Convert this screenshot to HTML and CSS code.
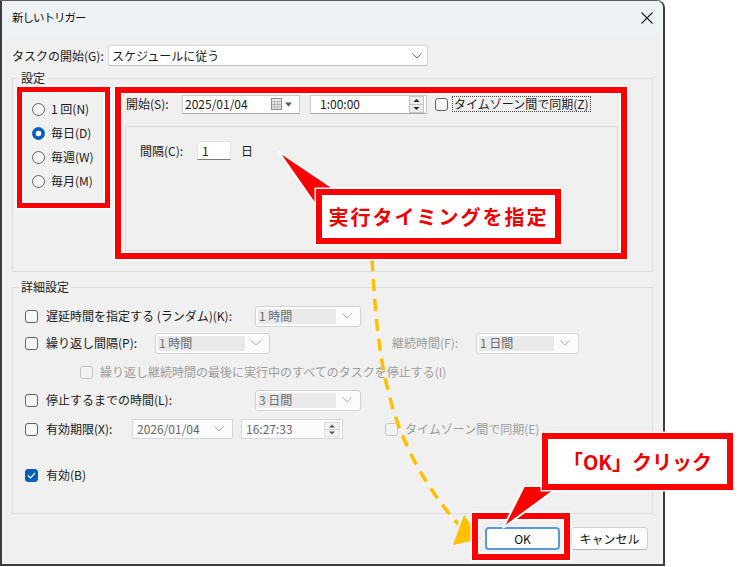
FILE: index.html
```html
<!DOCTYPE html>
<html lang="ja">
<head>
<meta charset="utf-8">
<title>新しいトリガー</title>
<link rel="stylesheet" href="styles.css">
</head>
<body>
<div class="window">
  <div class="titlebar">
    <span class="title">新しいトリガー</span>
    <svg class="close" width="12" height="12" viewBox="0 0 12 12"><path d="M0.5 0.5 L11.5 11.5 M11.5 0.5 L0.5 11.5" stroke="#1c1c1c" stroke-width="1.1" fill="none"/></svg>
  </div>
  <div class="body">
    <div class="row row-begin">
      <span class="lbl w-begin">タスクの開始(G):</span>
      <div class="combo combo-begin">
        <span class="combo-text">スケジュールに従う</span>
        <svg class="chev" width="10" height="6" viewBox="0 0 10 6"><path d="M0.5 0.5 L5 5 L9.5 0.5" stroke="#6a6a6a" stroke-width="1" fill="none"/></svg>
      </div>
    </div>

    <section class="group group-settings">
      <div class="group-title">設定</div>
      <div class="settings-inner">
        <div class="radios">
          <div class="radio-row"><span class="radio"></span><span class="lbl">1 回(N)</span></div>
          <div class="radio-row"><span class="radio checked"></span><span class="lbl">毎日(D)</span></div>
          <div class="radio-row"><span class="radio"></span><span class="lbl">毎週(W)</span></div>
          <div class="radio-row"><span class="radio"></span><span class="lbl">毎月(M)</span></div>
        </div>
        <div class="schedule">
          <div class="row row-start">
            <span class="lbl w-start">開始(S):</span>
            <div class="field date-field">
              <span>2025/01/04</span>
              <svg class="cal" width="22" height="12" viewBox="0 0 22 12">
                <rect x="0.5" y="0.5" width="10" height="11" fill="#e9e9e9" stroke="#8c8c8c"/>
                <path d="M0.5 3.5 H10.5 M0.5 6.5 H10.5 M0.5 9 H10.5 M3.5 3.5 V11.5 M7 3.5 V11.5" stroke="#a8a8a8" stroke-width="0.8"/>
                <path d="M14 4.5 L21 4.5 L17.5 8.5 Z" fill="#3c5a8c"/>
              </svg>
            </div>
            <div class="field time-field">
              <span>1:00:00</span>
              <svg class="spin" width="15" height="17" viewBox="0 0 15 17">
                <rect x="0.5" y="0.5" width="14" height="16" fill="#ececec" stroke="#c4c4c4"/>
                <path d="M1 8.5 H14" stroke="#c4c4c4"/>
                <path d="M4.5 6 L10.5 6 L7.5 3 Z" fill="#222"/>
                <path d="M4.5 11 L10.5 11 L7.5 14 Z" fill="#222"/>
              </svg>
            </div>
            <span class="check"></span>
            <span class="lbl focus-label">タイムゾーン間で同期(Z)</span>
          </div>
          <div class="subpanel">
            <div class="row row-interval">
              <span class="lbl w-interval">間隔(C):</span>
              <div class="input-box">1</div>
              <span class="lbl unit">日</span>
            </div>
          </div>
        </div>
      </div>
    </section>

    <section class="group group-adv">
      <div class="group-title">詳細設定</div>
      <div class="adv-inner">
        <div class="row adv-row">
          <span class="check"></span>
          <span class="lbl cb-lbl w-long">遅延時間を指定する (ランダム)(K):</span>
          <div class="dcombo w106"><span class="dtext">1 時間</span><svg class="chev" width="10" height="6" viewBox="0 0 10 6"><path d="M0.5 0.5 L5 5 L9.5 0.5" stroke="#b0b0b0" stroke-width="1" fill="none"/></svg></div>
        </div>
        <div class="row adv-row m5">
          <span class="check"></span>
          <span class="lbl cb-lbl w-repeat">繰り返し間隔(P):</span>
          <div class="dcombo w115"><span class="dtext">1 時間</span><svg class="chev" width="10" height="6" viewBox="0 0 10 6"><path d="M0.5 0.5 L5 5 L9.5 0.5" stroke="#b0b0b0" stroke-width="1" fill="none"/></svg></div>
          <span class="lbl dim w-dur">継続時間(F):</span>
          <div class="dcombo w103"><span class="dtext">1 日間</span><svg class="chev" width="10" height="6" viewBox="0 0 10 6"><path d="M0.5 0.5 L5 5 L9.5 0.5" stroke="#b0b0b0" stroke-width="1" fill="none"/></svg></div>
        </div>
        <div class="row adv-row m7">
          <span class="check disabled sub-check"></span>
          <span class="lbl dim sub-lbl">繰り返し継続時間の最後に実行中のすべてのタスクを停止する(I)</span>
        </div>
        <div class="row adv-row m6">
          <span class="check"></span>
          <span class="lbl cb-lbl w-long">停止するまでの時間(L):</span>
          <div class="dcombo w106"><span class="dtext">3 日間</span><svg class="chev" width="10" height="6" viewBox="0 0 10 6"><path d="M0.5 0.5 L5 5 L9.5 0.5" stroke="#b0b0b0" stroke-width="1" fill="none"/></svg></div>
        </div>
        <div class="row adv-row m7">
          <span class="check"></span>
          <span class="lbl cb-lbl w-exp">有効期限(X):</span>
          <div class="dfield w101"><span>2026/01/04</span><svg class="chev" width="10" height="6" viewBox="0 0 10 6"><path d="M0.5 0.5 L5 5 L9.5 0.5" stroke="#b0b0b0" stroke-width="1" fill="none"/></svg></div>
          <div class="dfield w102 ml8"><span>16:27:33</span>
            <svg class="spin" width="16" height="17" viewBox="0 0 16 17">
              <rect x="0.5" y="1.5" width="15" height="14" fill="#f3f3f3" stroke="#dcdcdc"/>
              <path d="M1 8.5 H15" stroke="#d0d0d0"/>
              <path d="M5 6.5 L11 6.5 L8 3.5 Z" fill="#555"/>
              <path d="M5 10.5 L11 10.5 L8 13.5 Z" fill="#555"/>
            </svg>
          </div>
          <span class="check disabled tz-check"></span>
          <span class="lbl dim tz-lbl">タイムゾーン間で同期(E)</span>
        </div>
        <div class="row adv-row m24">
          <span class="check checked">
            <svg width="9" height="7" viewBox="0 0 9 7"><path d="M1 3.5 L3.5 6 L8 1" stroke="#fff" stroke-width="1.2" fill="none"/></svg>
          </span>
          <span class="lbl cb-lbl">有効(B)</span>
        </div>
      </div>
    </section>

    <div class="buttons">
      <div class="btn btn-ok">OK</div>
      <div class="btn btn-cancel">キャンセル</div>
    </div>
  </div>
</div>

<svg class="annot" width="737" height="567" viewBox="0 0 737 567">
  <path d="M372,259 C378,360 385,440 458,524" stroke="#ffc000" stroke-width="3.5" stroke-dasharray="12 8" fill="none"/>
  <polygon points="481,539 453,545 464,515" fill="#ffc000"/>
  <g fill="none">
    <rect x="19.5" y="89.5" width="88" height="116" stroke="#fff" stroke-width="8"/>
    <rect x="19.5" y="89.5" width="88" height="116" stroke="#f00" stroke-width="5"/>
    <rect x="118" y="90" width="506" height="166" stroke="#fff" stroke-width="9"/>
    <rect x="118" y="90" width="506" height="166" stroke="#f00" stroke-width="6"/>
    <rect x="475" y="516" width="92" height="41" stroke="#fff" stroke-width="9"/>
    <rect x="475" y="516" width="92" height="41" stroke="#f00" stroke-width="6"/>
  </g>
  <polygon points="278,151 342,194 322,214" fill="#f00" stroke="#fff" stroke-width="2"/>
  <polygon points="503,528 524,486 560,486" fill="#f00" stroke="#fff" stroke-width="2"/>
</svg>
<div class="callout callout-timing">実行タイミングを指定</div>
<div class="callout callout-ok">「OK」クリック</div>
</body>
</html>
```
FILE: styles.css
```css
* { box-sizing: border-box; }

body {
  margin: 0;
  width: 737px;
  height: 567px;
  position: relative;
  overflow: hidden;
  background: #ffffff;
  font-family: "Noto Sans CJK JP", "Noto Sans", sans-serif;
  font-size: 12px;
  color: #1a1a1a;
}

.window {
  width: 665px;
  height: 566px;
  border: 2px solid #3d3d3d;
  border-top: 1px solid #5a5a5a;
  border-top-right-radius: 8px;
  background: #f0f0f0;
  display: flex;
  flex-direction: column;
  overflow: hidden;
}

.titlebar {
  flex: none;
  height: 34px;
  background: #eef2f7;
  display: flex;
  align-items: center;
  justify-content: space-between;
  padding: 0 10px;
}

.title {
  font-size: 11.5px;
  letter-spacing: -1px;
  line-height: 1;
  color: #111;
}

.body {
  flex: 1;
  padding: 0 10px;
  display: flex;
  flex-direction: column;
}

.row {
  display: flex;
  align-items: center;
}

.lbl {
  line-height: 1;
  white-space: nowrap;
}

.row-begin {
  flex: none;
  margin-top: 10px;
  height: 21px;
}

.w-begin { width: 96px; }

.combo {
  height: 21px;
  display: flex;
  align-items: center;
  justify-content: space-between;
  background: #fff;
  border: 1px solid #d6d6d6;
  border-bottom-color: #bdbdbd;
  border-radius: 3px;
  padding: 0 5px 0 3px;
  line-height: 1;
}

.combo-begin { width: 320px; }

/* group boxes */
.group {
  flex: none;
  border: 1px solid #dcdcdc;
}

.group-title {
  width: fit-content;
  margin: -8px 0 0 6px;
  padding: 0 2px;
  height: 14px;
  line-height: 14px;
  background: #f0f0f0;
}

.group-settings { margin-top: 12px; }

.settings-inner {
  height: 186px;
  padding-top: 9px;
  display: flex;
}

.radios {
  width: 112px;
  padding-left: 19px;
  padding-top: 3px;
}

.radio-row {
  height: 24px;
  display: flex;
  align-items: center;
  gap: 6px;
}

.radio {
  flex: none;
  width: 13px;
  height: 13px;
  border-radius: 50%;
  border: 1px solid #616161;
  background: #f7f7f7;
}

.radio.checked {
  border-color: #005fb8;
  background: radial-gradient(circle, #ffffff 0 2.6px, #005fb8 3.2px);
}

.schedule { width: 493px; }

.row-start { height: 20px; }

.w-start { width: 57px; padding-left: 1px; }

.field {
  height: 19px;
  background: #fff;
  border: 1px solid #cacaca;
  border-bottom-color: #a4a4a4;
  display: flex;
  align-items: center;
  justify-content: space-between;
  line-height: 1;
}

.date-field {
  width: 118px;
  padding: 0 6px 0 2px;
}

.time-field {
  width: 117px;
  margin-left: 10px;
  padding: 0 2px 0 9px;
}

.check {
  flex: none;
  width: 13px;
  height: 13px;
  border: 1px solid #5f5f5f;
  border-radius: 3px;
  background: #f7f7f7;
  display: flex;
  align-items: center;
  justify-content: center;
}

.check.disabled {
  border-color: #c6c6c6;
  background: #f3f3f3;
}

.check.checked {
  border-color: #005fb8;
  background: #005fb8;
}

.row-start .check { margin-left: 8px; }

.focus-label {
  margin-left: 5px;
  outline: 1px dotted #444;
  padding: 1px 1px;
}

.subpanel {
  margin-top: 12px;
  height: 125px;
  border: 1px solid #dadada;
}

.row-interval {
  margin-top: 14px;
  padding-left: 14px;
  height: 19px;
}

.w-interval { width: 57px; }

.input-box {
  width: 34px;
  height: 19px;
  background: #fff;
  border: 1px solid #e2e2e2;
  border-bottom: 1px solid #7c7c7c;
  padding: 0 0 0 4px;
  display: flex;
  align-items: center;
  line-height: 1;
}

.unit { margin-left: 10px; }

/* advanced group */
.group-adv { margin-top: 15px; }

.adv-inner {
  height: 219px;
  padding: 11px 0 0 12px;
}

.adv-row { height: 22px; }
.m5 { margin-top: 5px; }
.m6 { margin-top: 6px; }
.m7 { margin-top: 7px; }
.m24 { margin-top: 24px; }

.cb-lbl { margin-left: 8px; }
.w-long { width: 209px; }
.w-repeat { width: 109px; }
.w-exp { width: 86px; }

.dim { color: #9c9c9c; }

.w-dur {
  margin-left: 122px;
  width: 84px;
}

.dcombo {
  height: 21px;
  display: flex;
  align-items: center;
  gap: 6px;
  background: #fbfbfb;
  border: 1px solid #d2d2d2;
  border-radius: 3px;
  padding: 2px 8px 2px 2px;
  line-height: 1;
}

.dtext {
  flex: 1;
  align-self: stretch;
  display: flex;
  align-items: center;
  padding-left: 1px;
  background: #e9e9e9;
  color: #6a6a6a;
}

.w106 { width: 106px; }
.w115 { width: 115px; }
.w103 { width: 103px; }
.w101 { width: 101px; }
.w102 { width: 102px; }
.ml8 { margin-left: 8px; }

.dfield {
  height: 20px;
  display: flex;
  align-items: center;
  justify-content: space-between;
  background: #fbfbfb;
  border: 1px solid #d6d6d6;
  padding: 0 8px 0 4px;
  color: #6a6a6a;
  line-height: 1;
}

.dfield.ml8 { padding: 0 2px 0 4px; }

.sub-check { margin-left: 55px; }
.sub-lbl { margin-left: 7px; }

.tz-check { margin-left: 42px; }
.tz-lbl { margin-left: 7px; }

/* buttons */
.buttons {
  flex: none;
  margin-top: 13px;
  display: flex;
  justify-content: flex-end;
  gap: 11px;
  padding-right: 5px;
}

.btn {
  height: 23px;
  display: flex;
  align-items: center;
  justify-content: center;
  background: #fdfdfd;
  border: 1px solid #d0d0d0;
  border-bottom-color: #b5b5b5;
  border-radius: 4px;
  line-height: 1;
  color: #111;
}

.btn-ok {
  width: 75px;
  border: 2px solid #5b9bd5;
}

.btn-cancel { width: 77px; }

/* annotations */
.annot {
  position: absolute;
  left: 0;
  top: 0;
  pointer-events: none;
}

.callout {
  position: absolute;
  background: #fff;
  border: 6px solid #ff0000;
  box-shadow: 0 0 0 1.5px #ffffff;
  color: #ee0000;
  font-weight: bold;
  font-size: 20px;
  line-height: 1;
  display: flex;
  align-items: center;
  justify-content: center;
}

.callout-timing {
  left: 316px;
  top: 189px;
  width: 245px;
  height: 55px;
  letter-spacing: 2px;
}

.callout-ok {
  left: 542px;
  top: 433px;
  width: 191px;
  height: 57px;
}
```
